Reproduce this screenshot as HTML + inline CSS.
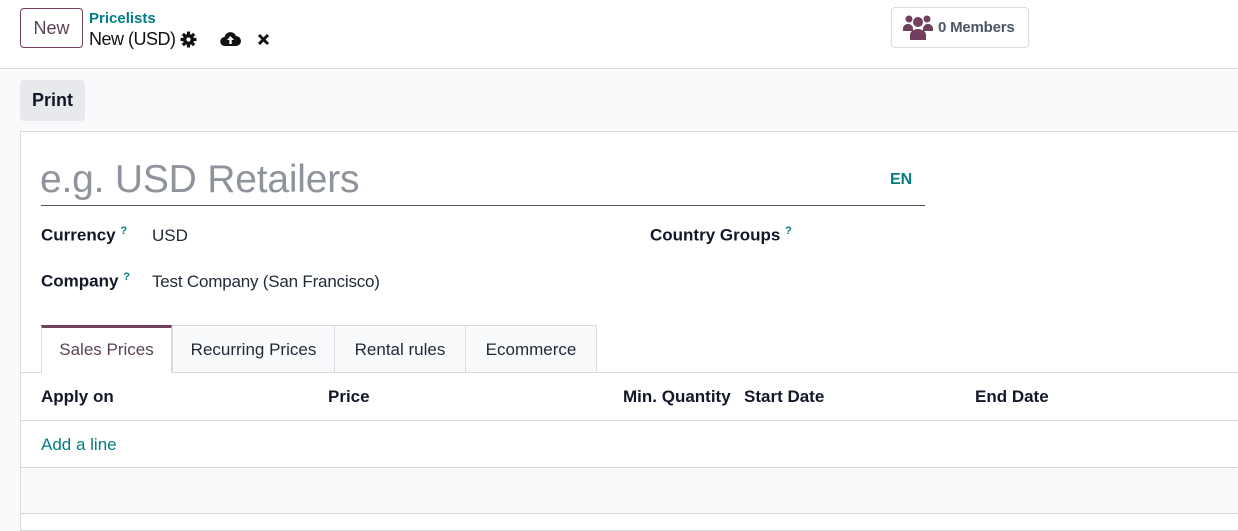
<!DOCTYPE html>
<html><head><style>
*{box-sizing:border-box;margin:0;padding:0}
body{width:1238px;height:521px;overflow:hidden;background:#f9fafb;font-family:"Liberation Sans",sans-serif;color:#1f2937;position:relative;font-size:17px}
.a{position:absolute;white-space:nowrap}
.top{position:absolute;left:0;top:0;width:1238px;height:69px;background:#fff;border-bottom:1px solid #d8dadd}
.sheet{position:absolute;left:20px;top:131px;width:1230px;height:400px;background:#fff;border:1px solid #d8dadd}
b{font-weight:bold;color:#111827}
sup{color:#017e84;font-size:11px;font-weight:bold}
</style></head><body>
<div class="top"></div>
<div class="a" style="left:20px;top:8px;width:63px;height:40px;border:1px solid #71405e;border-radius:4px;color:#5b4356;font-size:18px;text-align:center;line-height:38px">New</div>
<div class="a" style="left:89px;top:10px;color:#017e84;font-weight:bold;font-size:15px">Pricelists</div>
<div class="a" style="left:89px;top:29px;font-size:18px;color:#111;letter-spacing:-0.5px">New (USD)</div>
<svg class="a" style="left:180px;top:31px" width="17" height="17" viewBox="0 0 16 16"><g fill="#111"><circle cx="8" cy="8" r="5.2"/><rect x="6.5" y="0.5" width="3" height="15"/><rect x="0.5" y="6.5" width="15" height="3"/><rect x="6.5" y="0.5" width="3" height="15" transform="rotate(45 8 8)"/><rect x="6.5" y="0.5" width="3" height="15" transform="rotate(-45 8 8)"/></g><circle cx="8" cy="8" r="2" fill="#fff"/></svg>
<svg class="a" style="left:220px;top:31px" width="21" height="16" viewBox="0 0 21 16"><path d="M5 15a4.5 4.5 0 0 1-.5-9A6 6 0 0 1 16 5a5 5 0 0 1 0 10z" fill="#111"/><path d="M10.5 5l-3.5 4h2.3v4h2.4v-4H14z" fill="#fff"/></svg>
<svg class="a" style="left:257px;top:33px" width="13" height="13" viewBox="0 0 13 13"><path d="M2 2l9 9M11 2l-9 9" stroke="#111" stroke-width="3"/></svg>
<div class="a" style="left:891px;top:7px;width:138px;height:41px;border:1px solid #d8dadd;border-radius:4px"></div>
<svg class="a" style="left:903px;top:13px" width="30" height="28" viewBox="0 0 30 28"><g fill="#71405e"><circle cx="6" cy="6" r="3.5"/><circle cx="24" cy="6" r="3.5"/><circle cx="15" cy="9" r="5"/><path d="M0 17a5 5 0 0 1 10-2v3H0z"/><path d="M20 15a5 5 0 0 1 10 2v1H20z"/><path d="M7 27v-5a8 6 0 0 1 16 0v5z"/></g></svg>
<div class="a" style="left:938px;top:19px;font-size:15px;color:#4b5563;font-weight:bold;letter-spacing:-0.2px">0 Members</div>
<div class="a" style="left:20px;top:80px;width:65px;height:41px;background:#e7e9ed;border-radius:4px;font-size:18px;font-weight:bold;color:#111827;text-align:center;line-height:41px">Print</div>
<div class="sheet"></div>
<div class="a" style="left:40px;top:158px;font-size:39px;color:#8f949c;letter-spacing:-0.2px">e.g. USD Retailers</div>
<div class="a" style="left:41px;top:205px;width:884px;height:1px;background:#4b5563"></div>
<div class="a" style="left:890px;top:171px;color:#017e84;font-weight:bold;font-size:16px">EN</div>
<div class="a" style="left:41px;top:225px"><b>Currency</b> <sup>?</sup></div>
<div class="a" style="left:152px;top:226px">USD</div>
<div class="a" style="left:650px;top:225px"><b>Country Groups</b> <sup>?</sup></div>
<div class="a" style="left:41px;top:271px"><b>Company</b> <sup>?</sup></div>
<div class="a" style="left:152px;top:272px;letter-spacing:-0.2px">Test Company (San Francisco)</div>
<div class="a" style="left:21px;top:372px;width:1217px;height:1px;background:#d8dadd"></div>
<div class="a" style="left:41px;top:325px;width:131px;height:48px;background:#fff;border:1px solid #d8dadd;border-top:3px solid #71405e;border-bottom:none;color:#5b4356;text-align:center;line-height:44px">Sales Prices</div>
<div class="a" style="left:172px;top:325px;width:163px;height:47px;background:#f9fafb;border:1px solid #d8dadd;border-bottom:none;text-align:center;line-height:47px">Recurring Prices</div>
<div class="a" style="left:335px;top:325px;width:131px;height:47px;background:#f9fafb;border:1px solid #d8dadd;border-left:none;border-bottom:none;text-align:center;line-height:47px">Rental rules</div>
<div class="a" style="left:466px;top:325px;width:131px;height:47px;background:#f9fafb;border:1px solid #d8dadd;border-left:none;border-bottom:none;text-align:center;line-height:47px">Ecommerce</div>
<div class="a" style="left:41px;top:387px"><b>Apply on</b></div>
<div class="a" style="left:328px;top:387px"><b>Price</b></div>
<div class="a" style="left:623px;top:387px"><b>Min. Quantity</b></div>
<div class="a" style="left:744px;top:387px"><b>Start Date</b></div>
<div class="a" style="left:975px;top:387px"><b>End Date</b></div>
<div class="a" style="left:21px;top:420px;width:1217px;height:1px;background:#d8dadd"></div>
<div class="a" style="left:41px;top:435px;color:#017e84">Add a line</div>
<div class="a" style="left:21px;top:467px;width:1217px;height:47px;background:#fafafa;border-top:1px solid #d8dadd;border-bottom:1px solid #d8dadd"></div>
</body></html>
